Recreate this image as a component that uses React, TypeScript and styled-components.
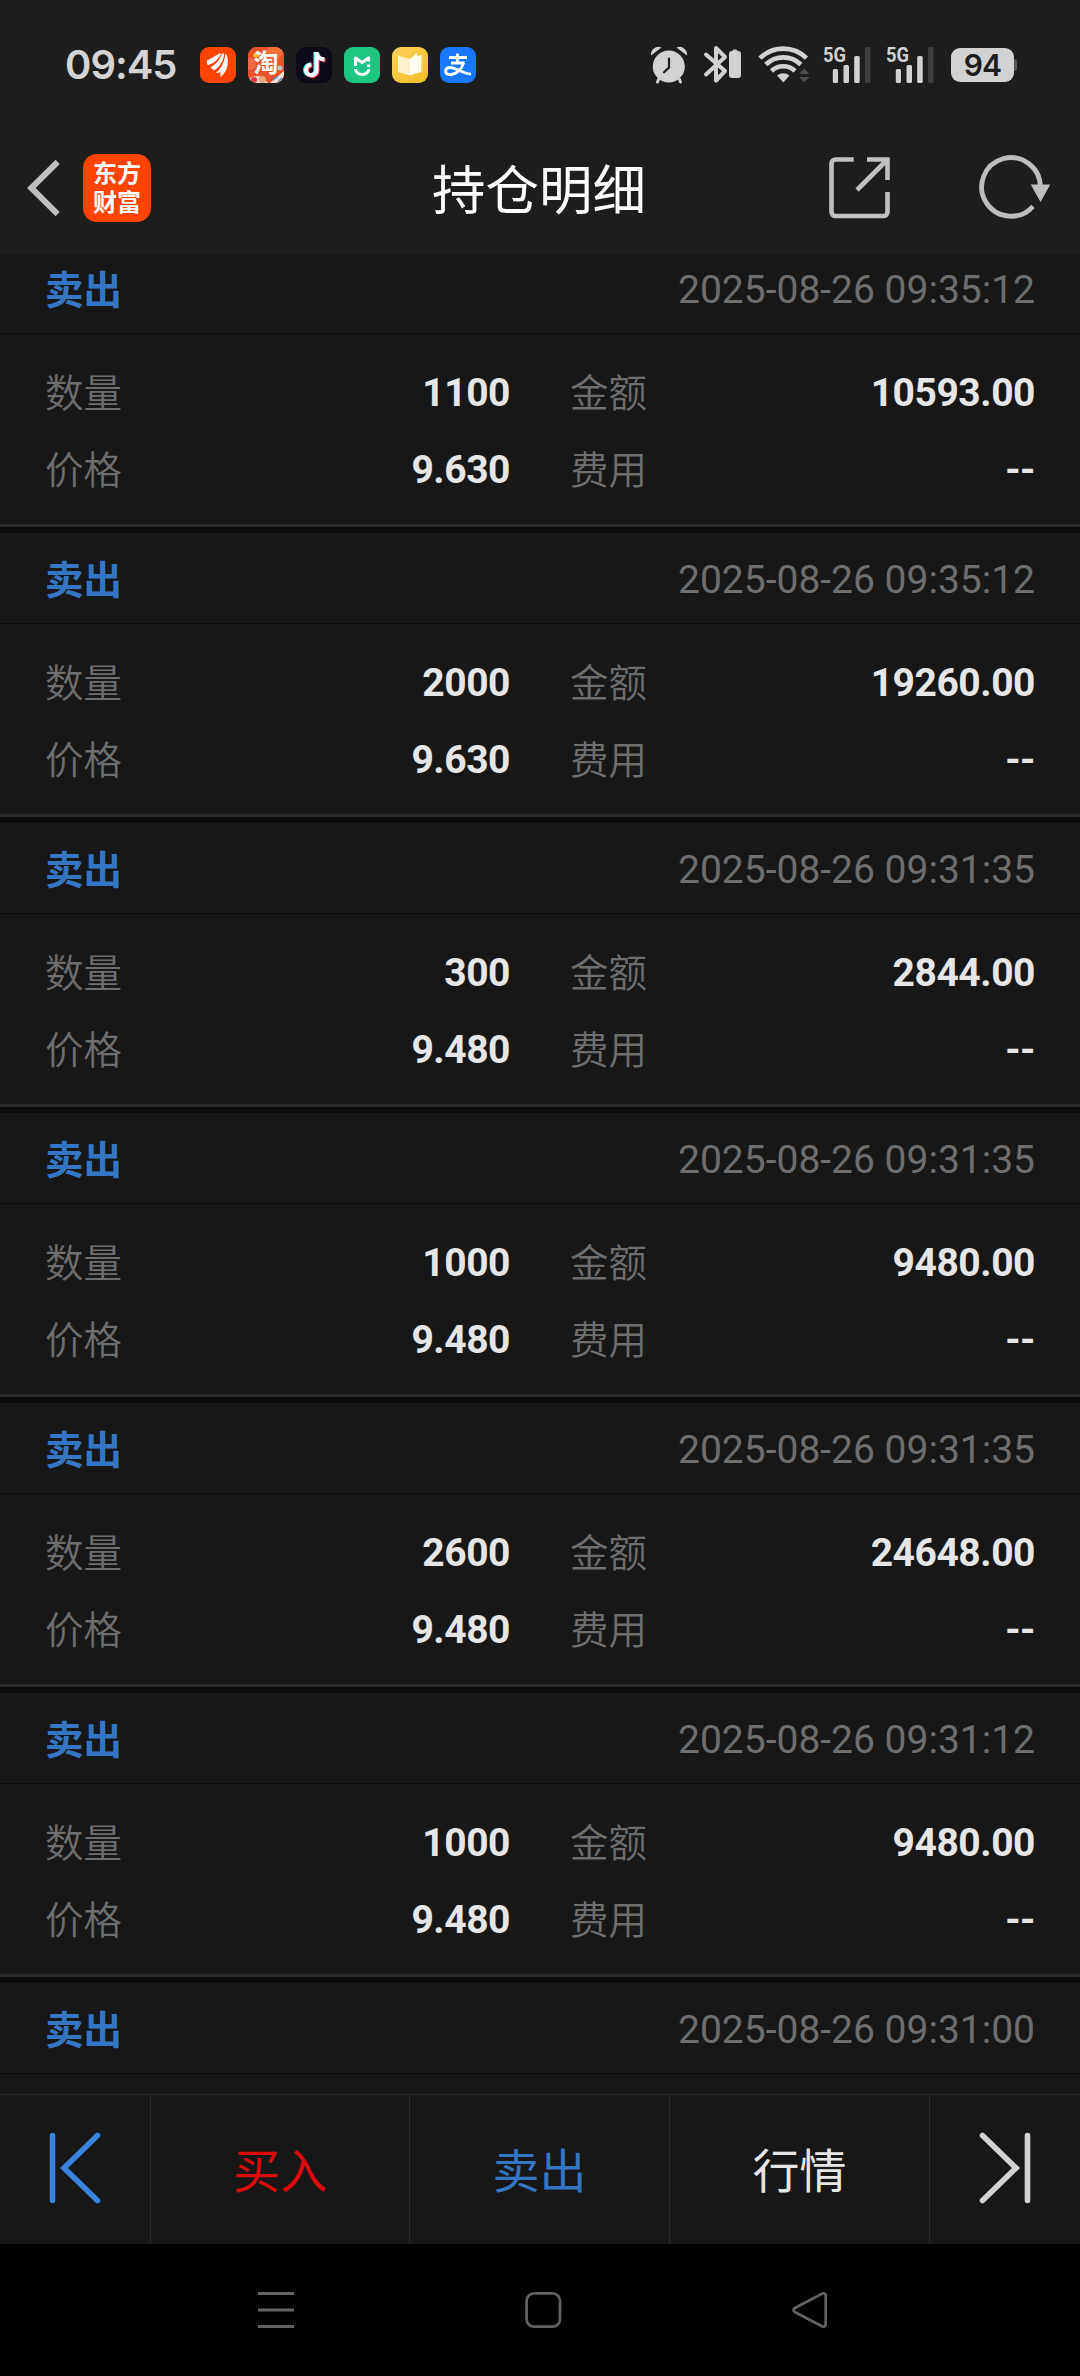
import React from 'react';
import styled, { createGlobalStyle } from 'styled-components';

const GlobalStyle = createGlobalStyle`
  *, *::before, *::after { box-sizing: border-box; }
  body {
    margin: 0;
    background: #000;
    font-family: Roboto, "Noto Sans CJK SC", sans-serif;
    -webkit-font-smoothing: antialiased;
  }
  svg { display: block; flex: none; overflow: visible; }
`;

const Screen = styled.div`
  display: flex;
  flex-direction: column;
  width: 1080px;
  height: 2376px;
  overflow: hidden;
  background: #171717;
`;

const StatusBar = styled.div`
  display: flex;
  align-items: center;
  justify-content: space-between;
  flex: none;
  height: 120px;
  padding: 10px 63px 0 65px;
  background: #1d1d1d;
`;

const Clock = styled.span`
  width: 135px;
  font: 600 40px/44px Inter, sans-serif;
  letter-spacing: -1px;
  color: #d4d4d4;
`;

const StatusGroup = styled.div`
  display: flex;
  align-items: center;
  height: 40px;
`;

const AppIcons = styled.div`
  display: flex;
  gap: 12px;
`;

const AppTile = styled.div<{ $bg: string }>`
  display: flex;
  align-items: center;
  justify-content: center;
  width: 36px;
  height: 36px;
  border-radius: 9px;
  background: ${(p) => p.$bg};
`;

const TileGlyph = styled.text`
  font: 700 25px "Noto Sans CJK SC", sans-serif;
`;

const BatteryBody = styled.div`
  display: flex;
  align-items: center;
  justify-content: center;
  width: 63px;
  height: 34px;
  margin-left: 2px;
  border-radius: 9px;
  background: #d2d2d2;
  color: #1d1d1d;
  font: 600 30px/34px Inter, sans-serif;
  letter-spacing: -0.8px;
`;

const BatteryNub = styled.div`
  width: 3px;
  height: 12px;
  border-radius: 0 3px 3px 0;
  background: #555;
`;

const NetworkLabel = styled.text`
  font: 700 21px Roboto, sans-serif;
`;

const Header = styled.header`
  display: grid;
  grid-template-columns: 1fr auto 1fr;
  align-items: center;
  flex: none;
  height: 135px;
  padding: 0 29px 0 27px;
  background: #1d1d1d;
`;

const HeaderSide = styled.div<{ $end?: boolean; $gap: number }>`
  display: flex;
  align-items: center;
  justify-content: ${(p) => (p.$end ? 'flex-end' : 'flex-start')};
  gap: ${(p) => p.$gap}px;
`;

const Title = styled.h1`
  margin: 0;
  padding-bottom: 2px;
  font: 400 53.5px/72px "Noto Sans CJK SC", sans-serif;
  color: #fff;
`;

const Brand = styled.div`
  display: flex;
  flex-direction: column;
  align-items: center;
  justify-content: center;
  width: 68px;
  height: 68px;
  padding-bottom: 4px;
  border-radius: 14px;
  background: #ff4400;
  color: #fff;
  font: 700 24px/29px "Noto Sans CJK SC", sans-serif;
`;

const List = styled.main`
  flex: 1;
  min-height: 0;
  overflow: hidden;
  margin-top: -12px;
`;

const Card = styled.section`
  height: 290px;
  border-bottom: 6px solid #0c0c0c;
`;

const CardHead = styled.div`
  display: flex;
  align-items: center;
  justify-content: space-between;
  height: 91px;
  padding: 3px 45px 0;
  border-bottom: 1px solid #0c0c0c;
`;

const Side = styled.span`
  padding-bottom: 6px;
  font: 700 38.5px/56px "Noto Sans CJK SC", sans-serif;
  color: #3476c4;
`;

const Time = styled.time`
  font-size: 39px;
  line-height: 56px;
  color: #6e6e6e;
`;

const CardBody = styled.div`
  display: grid;
  grid-template-columns: 1fr 1fr;
  grid-auto-rows: 77px;
  column-gap: 60px;
  height: 193px;
  padding: 20px 45px 0;
  border-bottom: 3px solid #2a2a2a;
`;

const Field = styled.div`
  display: flex;
  align-items: center;
  justify-content: space-between;
`;

const Label = styled.span`
  padding-bottom: 6px;
  font: 350 38.5px/56px "Noto Sans CJK SC", sans-serif;
  color: #6e6e6e;
`;

const Value = styled.span`
  font-size: 39px;
  font-weight: 700;
  line-height: 56px;
  letter-spacing: -0.45px;
  color: #e6e6e6;
`;

const ActionBar = styled.footer`
  display: grid;
  grid-template-columns: 151px 259px 260px 260px 150px;
  flex: none;
  position: relative;
  height: 150px;
  border-top: 1px solid #2a2a2a;
  background: #171717;
`;

const Action = styled.button<{ $color: string }>`
  display: flex;
  align-items: center;
  justify-content: center;
  padding: 0 0 4px;
  border: 0;
  border-right: 1px solid #2a2a2a;
  background: none;
  color: ${(p) => p.$color};
  font: 400 47px/64px "Noto Sans CJK SC", sans-serif;

  &:last-child { border-right: 0; }
`;

const NavBar = styled.nav`
  display: flex;
  align-items: center;
  justify-content: space-between;
  flex: none;
  height: 132px;
  padding: 0 252px 0 257px;
  background: #000;
`;

const records = [
  { time: '2025-08-26 09:35:12', qty: '1100', amount: '10593.00', price: '9.630' },
  { time: '2025-08-26 09:35:12', qty: '2000', amount: '19260.00', price: '9.630' },
  { time: '2025-08-26 09:31:35', qty: '300', amount: '2844.00', price: '9.480' },
  { time: '2025-08-26 09:31:35', qty: '1000', amount: '9480.00', price: '9.480' },
  { time: '2025-08-26 09:31:35', qty: '2600', amount: '24648.00', price: '9.480' },
  { time: '2025-08-26 09:31:12', qty: '1000', amount: '9480.00', price: '9.480' },
  { time: '2025-08-26 09:31:00', qty: '', amount: '', price: '' },
];

const EastMoneyIcon = () => (
  <svg width="36" height="36" viewBox="0 0 36 36" fill="#fff">
    <path d="M7 13.5C11 12 15 8.500 19.500 6.500L21.500 6.500C18.500 12 13.500 17 7.800 18C6.800 16.500 6.700 15 7 13.500Z" />
    <path d="M22.300 6.500L24.300 6.600C23.500 13.500 20 20 14.500 23.200C13 22.800 11.300 21.600 10.800 20.200C16 17.500 20 12 22.300 6.500Z" />
    <path d="M25.300 7L26.800 8C29.500 16 27 25 20.500 30C20.300 28.200 20.700 26.500 20.600 25C19 26 17.500 26.200 16 26C21.500 21 24.800 14 25.300 7Z" />
  </svg>
);

const TikTokIcon = () => {
  const note = 'M20.500 5v18a5.200 5.200 0 1 1-5.200-5.300M20.500 5.500c.6 4.200 3.500 6.800 8 7';
  return (
    <svg width="36" height="36" viewBox="0 0 36 36" fill="none" strokeWidth="4.200">
      <path d={note} stroke="#25e5e0" transform="translate(-1 0)" />
      <path d={note} stroke="#fe2c55" transform="translate(1 1)" />
      <path d={note} stroke="#fff" />
    </svg>
  );
};

const MiHomeIcon = () => (
  <svg width="36" height="36" viewBox="0 0 36 36" fill="none" stroke="#fff" strokeWidth="3.200">
    <path d="M11.500 19V11l6.500 4.500 6.500-4.500v3.500" strokeLinejoin="round" />
    <path d="M24.500 17.500v2.500" />
    <path d="M11.500 22a6.600 5.500 0 0 0 13.200 0" />
  </svg>
);

const BookIcon = () => (
  <svg width="36" height="36" viewBox="0 0 36 36">
    <path d="M6 8.500l12 3.500v16.500L6 25Z" fill="#fff1cd" />
    <path d="M18 12l11-4v17l-11 3.500Z" fill="#fff9e8" />
    <path d="M18 12l7-6v17l-7 5.500Z" fill="#fffdf6" />
    <path d="M30 8v17.500" stroke="#ffe9a8" strokeWidth="1" />
  </svg>
);

const AlipayIcon = () => (
  <svg width="36" height="36" viewBox="0 0 36 36" fill="none" stroke="#fff" strokeWidth="2.800">
    <path d="M9 10.500h18M17.500 6.500v9.500M11 16h13.500" />
    <path d="M23.500 16C22 22 16 28 9.500 27.500C4 27 4.500 20.500 10 20.500C16 20.500 22 26.500 31 27.200" />
  </svg>
);

const TaobaoArt = () => (
  <svg width="36" height="36" viewBox="0 0 36 36">
    <clipPath id="tile"><rect width="36" height="36" rx="9" /></clipPath>
    <g clipPath="url(#tile)">
      <rect width="36" height="36" fill="#e8532a" />
      <circle cx="27" cy="4" r="8" fill="#f0703a" />
      <circle cx="2" cy="17" r="6" fill="#ee6a44" />
      <path d="M36 24v12H22Z" fill="#f5e3d8" />
      <path d="M0 32q8-5 14-2l6 6H0Z" fill="#f2d3bd" />
      <circle cx="6" cy="33" r="3" fill="#e2354f" />
      <circle cx="14.500" cy="32.500" r="3.500" fill="#e7a878" />
      <path d="M25 33l5-4M30 35l4-4" stroke="#5b87c8" strokeWidth="1.500" />
      <circle cx="32" cy="21" r="2.500" fill="#b9c3cc" />
      <circle cx="8" cy="8" r="2.600" fill="#ffc52e" />
    </g>
    <TileGlyph x="5.500" y="24.500" fill="#fff">淘</TileGlyph>
  </svg>
);

const AlarmIcon = () => (
  <svg width="54" height="40" viewBox="0 0 54 40">
    <g stroke="#d2d2d2" strokeWidth="3" strokeLinecap="round">
      <path d="M8.500 34.500L7.500 37M29.500 34.500l1 2.500" />
    </g>
    <path d="M1 10.500C0 5 6.500-.5 11.500 2.500ZM37 10.500C38 5 31.500-.5 26.500 2.500Z" fill="#d2d2d2" />
    <circle cx="18.800" cy="21.500" r="16" fill="#d2d2d2" />
    <path d="M19 13.500v9l-5 4.800" stroke="#1d1d1d" strokeWidth="2.200" fill="none" strokeLinecap="round" />
  </svg>
);

const BluetoothIcon = () => (
  <svg width="54" height="40" viewBox="0 0 54 40">
    <path d="M2 9.500l19 16.500-9 9.500V3l9 9L2 29.500" fill="none" stroke="#d2d2d2" strokeWidth="4" strokeLinejoin="round" strokeLinecap="round" />
    <rect x="25" y="6" width="12" height="27" rx="3" fill="#d2d2d2" />
    <rect x="28.500" y="4.500" width="5" height="4" rx="1.500" fill="#d2d2d2" />
  </svg>
);

const WifiIcon = () => (
  <svg width="65" height="40" viewBox="0 0 65 40">
    <g fill="none" stroke="#d2d2d2" strokeWidth="4.600">
      <path d="M2 13.200a33 33 0 0 1 46.500 0" />
      <path d="M7.800 19.500a25 25 0 0 1 35 0" />
      <path d="M13.500 26a17 17 0 0 1 23.500 0" />
    </g>
    <path d="M19 30.500q6.200-4.500 12.500 0l-6.200 7Z" fill="#d2d2d2" />
    <path d="M41 29l5.200-5.500L51.500 29ZM41 32l5.200 5.500L51.500 32Z" fill="#4c4c4c" />
  </svg>
);

const SignalIcon = () => (
  <svg width="63" height="40" viewBox="0 0 63 40">
    <NetworkLabel x="0" y="17" fill="#d2d2d2" textLength="23" lengthAdjust="spacingAndGlyphs">5G</NetworkLabel>
    <g fill="#d2d2d2">
      <rect x="9.800" y="24" width="5.200" height="14" rx="1.500" />
      <rect x="20.500" y="20" width="5.500" height="18" rx="1.500" />
      <rect x="31.200" y="11" width="5.500" height="27" rx="1.500" />
    </g>
    <rect x="42" y="2" width="5.500" height="36" rx="1.500" fill="#3f3f3f" />
  </svg>
);

const BackIcon = () => (
  <svg width="32" height="56" viewBox="0 0 32 56">
    <path d="M28.500 4L4.300 28l24.200 24" fill="none" stroke="#bfbfbf" strokeWidth="6" strokeLinecap="square" />
  </svg>
);

const ShareIcon = () => (
  <svg width="62" height="62" viewBox="0 0 62 62" fill="none" stroke="#c0c0c0" strokeWidth="4.600">
    <path d="M24.700 2.500H6.500a4 4 0 0 0-4 4v48.500a4 4 0 0 0 4 4h48a4 4 0 0 0 4-4V35" />
    <path d="M38 2.500h20.500V23M28 33L57.500 3.500" />
  </svg>
);

const RefreshIcon = () => (
  <svg width="72" height="64" viewBox="0 0 72 64">
    <path d="M61.300 31A29.300 29.300 0 1 0 54 50.300" fill="none" stroke="#bdbdbd" strokeWidth="4.800" />
    <path d="M51.700 28.500h19.600L61.500 46Z" fill="#bdbdbd" />
  </svg>
);

const StepIcon = ({ color, flipped }: { color: string; flipped?: boolean }) => (
  <svg width="52" height="72" viewBox="0 0 52 72">
    <g
      fill="none"
      stroke={color}
      strokeWidth="5.600"
      strokeLinecap="round"
      transform={flipped ? 'translate(52 0) scale(-1 1)' : undefined}
    >
      <path d="M3.500 3.500v65" />
      <path d="M48.500 3.500L15 36l33.500 32.500" />
    </g>
  </svg>
);

const MenuIcon = () => (
  <svg width="38" height="38" viewBox="0 0 38 38" stroke="#626262" strokeWidth="3">
    <path d="M1 2.500h36M1 19h36M1 35.500h36" />
  </svg>
);

const HomeIcon = () => (
  <svg width="38" height="38" viewBox="0 0 38 38">
    <rect x="2.600" y="2.300" width="33.400" height="33.400" rx="7.500" fill="none" stroke="#626262" strokeWidth="2.700" />
  </svg>
);

const TriangleIcon = () => (
  <svg width="38" height="38" viewBox="0 0 38 38">
    <path d="M32.500 2.500L4.800 17a2.200 2.200 0 0 0 0 4L32.500 35.500a2.200 2.200 0 0 0 3.200-2V4.500A2.200 2.200 0 0 0 32.500 2.500Z" fill="none" stroke="#626262" strokeWidth="2.700" />
  </svg>
);

export default function App() {
  return (
    <>
      <GlobalStyle />
      <Screen>
        <StatusBar>
          <StatusGroup>
            <Clock>09:45</Clock>
            <AppIcons>
              <AppTile $bg="#ff4400"><EastMoneyIcon /></AppTile>
              <AppTile $bg="#e8532a"><TaobaoArt /></AppTile>
              <AppTile $bg="#0b0b17"><TikTokIcon /></AppTile>
              <AppTile $bg="#1fc681"><MiHomeIcon /></AppTile>
              <AppTile $bg="linear-gradient(135deg, #fdd05c, #f5bd25)"><BookIcon /></AppTile>
              <AppTile $bg="#1777ff"><AlipayIcon /></AppTile>
            </AppIcons>
          </StatusGroup>
          <StatusGroup>
            <AlarmIcon />
            <BluetoothIcon />
            <WifiIcon />
            <SignalIcon />
            <SignalIcon />
            <BatteryBody>94</BatteryBody>
            <BatteryNub />
          </StatusGroup>
        </StatusBar>

        <Header>
          <HeaderSide $gap={24}>
            <BackIcon />
            <Brand>
              <span>东方</span>
              <span>财富</span>
            </Brand>
          </HeaderSide>
          <Title>持仓明细</Title>
          <HeaderSide $end $gap={88}>
            <ShareIcon />
            <RefreshIcon />
          </HeaderSide>
        </Header>

        <List>
          {records.map((r, i) => (
            <Card key={i}>
              <CardHead>
                <Side>卖出</Side>
                <Time>{r.time}</Time>
              </CardHead>
              {r.qty && (
                <CardBody>
                  <Field><Label>数量</Label><Value>{r.qty}</Value></Field>
                  <Field><Label>金额</Label><Value>{r.amount}</Value></Field>
                  <Field><Label>价格</Label><Value>{r.price}</Value></Field>
                  <Field><Label>费用</Label><Value>--</Value></Field>
                </CardBody>
              )}
            </Card>
          ))}
        </List>

        <ActionBar>
          <Action $color="#3b82de"><StepIcon color="#3b82de" /></Action>
          <Action $color="#dc0a0a">买入</Action>
          <Action $color="#3476c4">卖出</Action>
          <Action $color="#e6e6e6">行情</Action>
          <Action $color="#d2d2d2"><StepIcon color="#d2d2d2" flipped /></Action>
        </ActionBar>

        <NavBar>
          <MenuIcon />
          <HomeIcon />
          <TriangleIcon />
        </NavBar>
      </Screen>
    </>
  );
}
